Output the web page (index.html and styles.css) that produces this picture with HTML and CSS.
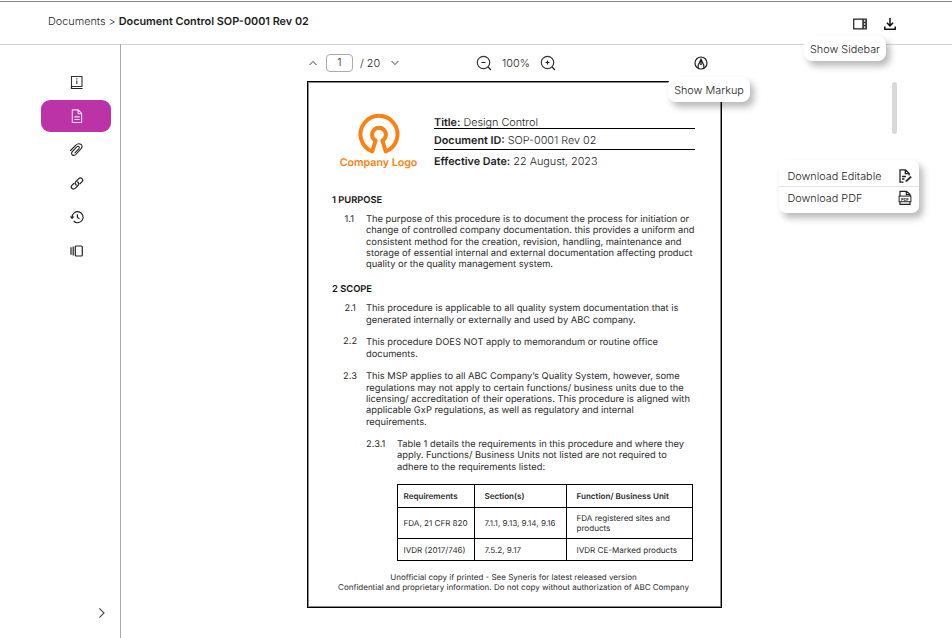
FILE: index.html
```html
<!DOCTYPE html>
<html lang="en">
<head>
<meta charset="utf-8">
<title>Document Control SOP-0001 Rev 02</title>
<link rel="stylesheet" href="styles.css">
</head>
<body>
<div class="app">
  <header class="topbar">
    <nav class="crumbs">Documents &gt; <b>Document Control SOP-0001 Rev 02</b></nav>
    <div class="actions">
      <svg class="ic-side" viewBox="0 0 14 12"><path d="M.7 1.200h12.600v9.600H.7zM9.900 1.200v9.600" fill="none" stroke="#222" stroke-width="1.200"/><path d="M11.600 2v8" stroke="#222" stroke-width="2.600"/><path d="M11 2.900h1.400M11 6h1.400M11 9.100h1.400" stroke="#fff" stroke-width="1.500"/></svg>
      <svg class="ic-down" viewBox="0 0 12 12"><path d="M6 0v7.600M2.900 4.800L6 7.900l3.100-3.100M.8 8.600v2.600h10.400V8.600" fill="none" stroke="#111" stroke-width="1.500"/></svg>
      <div class="tip tip-side">Show Sidebar</div>
    </div>
  </header>
  <div class="body">
    <aside class="rail">
      <a class="item"><svg viewBox="0 0 14 14"><path d="M1.500 1.500h10.500v10H1.500zM6.800 5.500v3.500M6.800 3.300v1.200" fill="none" stroke="#333" stroke-width="1.100"/><path d="M1.500 11v2.500h11" fill="none" stroke="#222" stroke-width="1.200"/></svg></a>
      <a class="item active"><svg viewBox="0 0 14 14"><path d="M2.300.9h6l3.300 3.500v9.100H2.300zM8.100 1v3.800h3.400M4.300 7.900h5.400M4.300 10.500h5.400" fill="none" stroke="#f6dff2" stroke-width="1.100" stroke-linejoin="round"/></svg></a>
      <a class="item"><svg viewBox="0 0 14 14"><path d="M.6 7.500l5-5.200C9.200-1 14 2 11.300 5.400L6.300 11c-2.800 3-6.200.3-4-2.300L6.800 3.900c1.500-1.400 3.500.1 2 1.900L5 9.800" fill="none" stroke="#222" stroke-width="1.100" stroke-linecap="round"/></svg></a>
      <a class="item"><svg viewBox="0 0 14 14"><path d="M6.200 8C4.800 6.600 5.200 5.300 6 4.500l2.600-2.600c2.500-2.300 5.500.6 3.300 3L10.200 6.500M7.800 5c1.400 1.400 1 2.700.2 3.500l-2.600 2.600c-2.500 2.300-5.500-.6-3.300-3L3.800 6.500" fill="none" stroke="#222" stroke-width="1.200" stroke-linecap="round"/></svg></a>
      <a class="item"><svg viewBox="0 0 14 14"><path d="M2.100 7.300a5.500 5.500 0 1 1 1.500 3.700M7.400 4.200v3.200l2.100 1.300" fill="none" stroke="#222" stroke-width="1.200"/><path d="M-.2 6.500h4.600L2.100 9.300z" fill="#222"/></svg></a>
      <a class="item"><svg viewBox="0 0 14 14"><rect x="5.300" y="2" width="7" height="10" rx="1" fill="none" stroke="#222" stroke-width="1.200"/><path d="M3.200 2.400v9.200M1 3.300v7.400" stroke="#222" stroke-width="1.200"/></svg></a>
      <svg class="expand" viewBox="0 0 8 12"><path d="M1.400 1.400L6 6 1.400 10.600" fill="none" stroke="#444" stroke-width="1.100"/></svg>
    </aside>
    <main class="viewer">
      <div class="toolbar">
        <svg class="chev" viewBox="0 0 8 6"><path d="M.6 5L4 1.400 7.400 5" fill="none" stroke="#444" stroke-width="1"/></svg>
        <span class="pageno">1</span>
        <span class="total">/ 20</span>
        <svg class="chev" viewBox="0 0 8 6"><path d="M.6 1L4 4.600 7.400 1" fill="none" stroke="#444" stroke-width="1"/></svg>
        <svg class="zoom zoom-out" viewBox="0 0 16 16"><circle cx="7.500" cy="7.500" r="6.200" fill="none" stroke="#333" stroke-width="1.200"/><path d="M5.500 7.500h4M12 12l3 3" stroke="#222" stroke-width="1.200"/></svg>
        <span class="pct">100%</span>
        <svg class="zoom" viewBox="0 0 16 16"><circle cx="7.500" cy="7.500" r="6.200" fill="none" stroke="#333" stroke-width="1.200"/><path d="M5.500 7.500h4M7.500 5.500v4M12 12l3 3" stroke="#222" stroke-width="1.200"/></svg>
        <div class="markup">
          <svg viewBox="0 0 14 14"><circle cx="7" cy="7" r="6" fill="none" stroke="#222" stroke-width="1.200"/><path d="M4.200 12V9.200L7 3.200l2.800 6V12M7 3.500V8" fill="none" stroke="#222" stroke-width="1.200"/><circle cx="7" cy="8.300" r=".9" fill="#222"/></svg>
          <div class="tip tip-mark">Show Markup</div>
        </div>
      </div>
      <article class="page">
        <div class="masthead">
          <div class="brand">
            <svg viewBox="0 0 42 40"><path d="M14.200 37.500A18.500 18.500 0 1 1 27.800 37.500L24.400 26.600A6.900 6.900 0 1 0 17.600 26.600Z" fill="none" stroke="#fb8112" stroke-width="4" stroke-linejoin="round"/></svg>
            <span>Company Logo</span>
          </div>
          <div class="meta">
            <div class="m1"><b>Title:</b> Design Control</div>
            <div class="m2"><b>Document ID:</b> SOP-0001 Rev 02</div>
            <div class="m3"><b>Effective Date:</b> 22 August, 2023</div>
          </div>
        </div>
        <h2>1 PURPOSE</h2>
        <div class="clause"><span class="num">1.1</span><p>The purpose of this procedure is to document the process for initiation or<br>change of controlled company documentation. this provides a uniform and<br>consistent method for the creation, revision, handling, maintenance and<br>storage of essential internal and external documentation affecting product<br>quality or the quality management system.</p></div>
        <h2 class="scope">2 SCOPE</h2>
        <div class="clause"><span class="num">2.1</span><p>This procedure is applicable to all quality system documentation that is<br>generated internally or externally and used by ABC company.</p></div>
        <div class="clause"><span class="num wide">2.2</span><p>This procedure DOES NOT apply to memorandum or routine office<br>documents.</p></div>
        <div class="clause"><span class="num wide low">2.3</span><p>This MSP applies to all ABC Company’s Quality System, however, some<br>regulations may not apply to certain functions/ business units due to the<br>licensing/ accreditation of their operations. This procedure is aligned with<br>applicable GxP regulations, as well as regulatory and internal<br>requirements.</p></div>
        <div class="clause sub"><span class="num">2.3.1</span><p>Table 1 details the requirements in this procedure and where they<br>apply. Functions/ Business Units not listed are not required to<br>adhere to the requirements listed:</p></div>
        <table>
          <tr class="r1"><th>Requirements</th><th>Section(s)</th><th>Function/ Business Unit</th></tr>
          <tr class="r2"><td>FDA, 21 CFR 820</td><td>7.1.1, 9.13, 9.14, 9.16</td><td>FDA registered sites and<br>products</td></tr>
          <tr class="r3"><td>IVDR (2017/746)</td><td>7.5.2, 9.17</td><td>IVDR CE-Marked products</td></tr>
        </table>
        <footer>Unofficial copy if printed - See Syneris for latest released version<br>Confidential and proprietary information. Do not copy without authorization of ABC Company</footer>
      </article>
    </main>
  </div>
  <div class="scroll"></div>
  <div class="menu">
    <div class="opt">Download Editable
      <svg viewBox="0 0 14 14"><path d="M5.500 13.200H2V.8h5.500l3.700 3.700v2M7.300.8v3.900h3.900M4 7.500h4M4 10h2.500" fill="none" stroke="#222" stroke-width="1.300"/><path d="M7.500 13l.4-1.700 4.600-4.300 1.300 1.300-4.600 4.300z" fill="#222"/></svg></div>
    <div class="opt last">Download PDF
      <svg viewBox="0 0 14 14"><path d="M2 5V.3h6.500l3.500 3V5M8.300.3v3.300h3.700" fill="none" stroke="#222" stroke-width="1.200"/><rect x="1.100" y="5.100" width="11.800" height="5.600" fill="none" stroke="#222" stroke-width="1"/><path d="M2 11v2.300h10V11" fill="none" stroke="#222" stroke-width="1.200"/><text x="7" y="9.500" text-anchor="middle">PDF</text></svg></div>
  </div>
</div>
</body>
</html>
```
FILE: styles.css
```css
* { box-sizing: border-box; }
body { margin: 0; background: #fff; color: #1c1c1c; font-family: Inter, "Liberation Sans", sans-serif; text-rendering: geometricPrecision; font-weight: 300; }
svg { display: block; flex: none; overflow: visible; }
.app { position: relative; width: 952px; height: 638px; overflow: hidden; padding-top: 1px; display: flex; flex-direction: column; }
.topbar { height: 44px; flex: none; border-top: 1px solid #888; border-bottom: 1px solid #d2d2d2; display: flex; justify-content: space-between; padding: 0 56px 0 48px; }
.crumbs { font-size: 10.850px; line-height: 14px; margin-top: 12px; white-space: nowrap; }
b { font-weight: 600; }
.actions { position: relative; display: flex; gap: 17px; align-items: flex-start; padding-top: 15.500px; }
.ic-side { width: 14px; height: 12px; }
.ic-down { width: 12px; height: 12px; }
.tip { position: absolute; background: #fff; border-radius: 8px; box-shadow: 4px 5px 7px rgba(0,0,0,.28); font-size: 10.850px; height: 25px; line-height: 27px; text-align: center; white-space: nowrap; z-index: 3; }
.tip-side { left: -49px; top: 34px; width: 82px; }
.body { flex: 1; display: flex; }
.rail { width: 121px; border-right: 1px solid #aaa; margin-top: -1px; display: flex; flex-direction: column; padding: 22.300px 9px 19px 40.500px; }
.item { width: 70.500px; height: 32px; margin-bottom: 1.800px; border-radius: 9px; display: flex; align-items: center; justify-content: center; flex: none; }
.item svg { width: 14px; height: 14px; margin-left: 1.500px; }
.active { background: #bb33a7; }
.expand { width: 8px; height: 12px; margin: auto 5px 0 auto; }
.viewer { padding-left: 186px; }
.toolbar { height: 36px; width: 415px; display: flex; align-items: center; font-size: 10.850px; color: #222; }
.chev { width: 8px; height: 6px; margin-left: 1.500px; }
.pageno { width: 27px; height: 18px; border: 1px solid #aaa; border-radius: 4px; margin-left: 9.500px; line-height: 15px; text-align: center; }
.total { margin: 0 9px 0 7px; width: 20px; white-space: nowrap; }
.zoom { width: 16px; height: 16px; margin-left: 11px; }
.zoom-out { margin-left: 77px; }
.pct { margin-left: 10.500px; width: 27px; white-space: nowrap; }
.markup { position: relative; margin-left: auto; margin-right: 14px; }
.markup svg { width: 14px; height: 14px; }
.tip-mark { left: -26px; top: 21px; width: 82px; }
.page { width: 415px; height: 527px; border: 1px solid #000; box-shadow: inset 0 0 0 1px #8a8a8a; padding: 31px 24px 0; font-size: 9.340px; line-height: 11.350px; font-weight: 400; color: #2b2b2b; }
.masthead { display: flex; height: 79px; }
.brand { width: 93px; padding-top: 1px; text-align: center; color: #fb8112; font-size: 10.650px; font-weight: 600; line-height: 13px; white-space: nowrap; }
.brand svg { width: 42px; height: 40px; margin: 0 auto 2px; }
.meta { width: 261px; margin-left: 9px; font-size: 10.800px; font-weight: 300; line-height: 14px; white-space: nowrap; color: #1c1c1c; }
.m1 { border-bottom: 1px solid #000; height: 16px; padding-top: 3px; line-height: 13px; }
.m2 { border-bottom: 1px solid #000; height: 21px; padding-top: 5px; }
.m3 { padding-top: 4.500px; }
h2 { font-size: 9.350px; line-height: 12px; font-weight: 600; margin: 3px 0 7px; color: #111; }
h2.scope { margin-top: 13.700px; }
.clause { display: flex; padding-left: 12.500px; margin-bottom: 11.200px; white-space: nowrap; }
.clause p { margin: 0; }
.num { width: 21.500px; }
.wide { width: 23px; margin-left: -1.500px; position: relative; top: -1px; }
.low { top: 0; }
.sub { padding-left: 34px; margin-bottom: 11.300px; }
.sub .num { width: 31px; }
table { border-collapse: collapse; table-layout: fixed; width: 296px; margin-left: 65px; font-size: 8.080px; line-height: 10px; white-space: nowrap; }
th, td { border: 1px solid #000; text-align: left; padding: 0 0 0 9.500px; }
th { font-weight: 600; }
th:first-child, td:first-child { width: 77px; padding-left: 5.500px; }
th:nth-child(2) { width: 92px; }
.r1 { height: 23px; } .r2 { height: 31px; } .r3 { height: 22px; }
footer { text-align: center; font-size: 8px; line-height: 10px; margin-top: 11px; margin-left: -2px; white-space: nowrap; }
.scroll { position: absolute; left: 892px; top: 82px; width: 5px; height: 52px; border-radius: 3px; background: #d9d9d9; }
.menu { position: absolute; left: 779px; top: 160px; width: 140px; height: 53px; background: #fff; border-radius: 7px; box-shadow: 4px 5px 7px rgba(0,0,0,.28); font-size: 10.850px; padding-top: 3px; }
.opt { height: 23px; display: flex; align-items: center; justify-content: space-between; padding: 2px 7px 0 8.500px; white-space: nowrap; }
.last { border-top: 1px solid #e4e4e4; padding-top: 0; }
.opt svg { width: 14px; height: 14px; }
.opt text { font-size: 4px; font-weight: 700; fill: #222; }
```
